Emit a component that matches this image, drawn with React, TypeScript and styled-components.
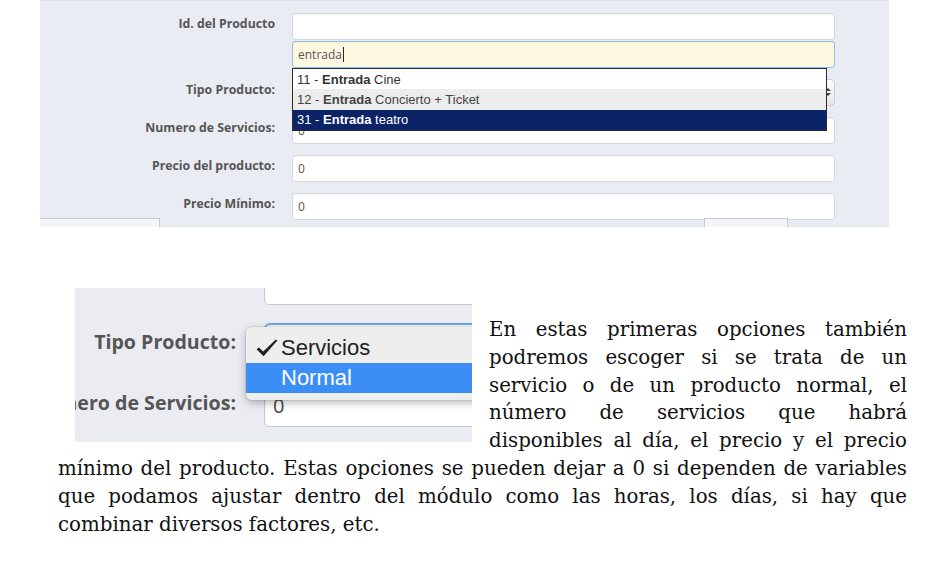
import React from 'react'
import styled, { createGlobalStyle } from 'styled-components'

type Tone = 'plain' | 'hover' | 'active'

const suggestions: { id: string; rest: string; tone: Tone }[] = [
    { id: '11', rest: 'Cine', tone: 'plain' },
    { id: '12', rest: 'Concierto + Ticket', tone: 'hover' },
    { id: '31', rest: 'teatro', tone: 'active' },
]

const besideLines = [
    'En estas primeras opciones también',
    'podremos escoger si se trata de un',
    'servicio o de un producto normal, el',
    'número de servicios que habrá',
    'disponibles al día, el precio y el precio',
]

const fullLines = [
    'mínimo del producto. Estas opciones se pueden dejar a 0 si dependen de variables',
    'que podamos ajustar dentro del módulo como las horas, los días, si hay que',
    'combinar diversos factores, etc.',
]

const App = () => {
    return (
        <Page>
            <GlobalStyle />
            <Shot>
                <FormGrid>
                    <Label>Id. del Producto</Label>
                    <IdStack>
                        <TextBox />
                        <SearchBox>
                            entrada<Caret />
                        </SearchBox>
                        <SuggestList>
                            {suggestions.map((s) => (
                                <SuggestItem key={s.id} $tone={s.tone}>
                                    {s.id} - <b>Entrada</b>&nbsp;{s.rest}
                                </SuggestItem>
                            ))}
                        </SuggestList>
                    </IdStack>

                    <Label>Tipo Producto:</Label>
                    <SelectBox>
                        <SelectArrows width="6" height="10" viewBox="0 0 6 10">
                            <path d="M0 4 L3 1 L6 4 Z M0 6 L3 9 L6 6 Z" fill="#444" />
                        </SelectArrows>
                    </SelectBox>

                    <Label>Numero de Servicios:</Label>
                    <TextBox>0</TextBox>

                    <Label>Precio del producto:</Label>
                    <TextBox>0</TextBox>

                    <Label>Precio Mínimo:</Label>
                    <TextBox>0</TextBox>
                </FormGrid>
                <Footer>
                    <FooterButton $width={121}>Guardar y seguir</FooterButton>
                    <FooterButton $width={84} $right>Guardar</FooterButton>
                </Footer>
            </Shot>

            <Doc>
                <Figure>
                    <ZoomGrid>
                        <ZoomLabel />
                        <ZoomBox />

                        <ZoomLabel>Tipo Producto:</ZoomLabel>
                        <ZoomSelect>
                            <Menu>
                                <MenuItem>
                                    <CheckSlot>
                                        <svg width="22" height="18" viewBox="0 0 22 18">
                                            <path d="M0.5 10.2 L3 8.4 L7.2 12.6 L19.8 0.4 L21.4 1.4 L7.6 17.2 Z" fill="#222" />
                                        </svg>
                                    </CheckSlot>
                                    Servicios
                                </MenuItem>
                                <MenuItem $active>
                                    <CheckSlot />
                                    Normal
                                </MenuItem>
                            </Menu>
                        </ZoomSelect>

                        <ZoomLabel>Numero de Servicios:</ZoomLabel>
                        <ZoomBox>0</ZoomBox>
                    </ZoomGrid>
                </Figure>
                <TextCol>
                    {besideLines.map((l) => (
                        <Line key={l}>{l}</Line>
                    ))}
                    {fullLines.map((l, i) => (
                        <Line key={l} $end={i === fullLines.length - 1}>{l}</Line>
                    ))}
                </TextCol>
            </Doc>
        </Page>
    )
}

const GlobalStyle = createGlobalStyle`
    html, body {
        margin:0;
        padding:0;
        background:#fff;
    }
    body{
        font-family:"Open Sans", "Liberation Sans", sans-serif;
    }
`;

const Page = styled.div`
    width:945px;
    padding-left:40px;
    box-sizing:border-box;
    display:flex;
    flex-direction:column;
`;

/* ---------- top screenshot ---------- */

const Shot = styled.div`
    width:849px;
    height:227px;
    box-sizing:border-box;
    padding-top:12px;
    border-top:1px solid #dfe3eb;
    background:#e9ecf2;
    overflow:hidden;
`;

const FormGrid = styled.div`
    display:grid;
    grid-template-columns:235px 543px;
    column-gap:17px;
    row-gap:11px;
    align-items:start;
`;

const Label = styled.div`
    font-weight:700;
    font-size:12.3px;
    line-height:17px;
    color:#555;
    text-align:right;
    white-space:nowrap;
    padding-top:2px;
`;

const IdStack = styled.div`
    position:relative;
    display:flex;
    flex-direction:column;
    gap:1px;
`;

const TextBox = styled.div`
    height:27px;
    box-sizing:border-box;
    display:flex;
    align-items:center;
    padding:0 5px;
    border:1px solid #d5d8de;
    border-radius:3px;
    background:#fff;
    box-shadow:inset 0 1px 1px rgba(0,0,0,0.05);
    font-family:"Open Sans", sans-serif;
    font-size:12px;
    color:#555;
`;

const SearchBox = styled(TextBox)`
    background:#fef8e1;
    border-color:#8fc0ea;
`;

const Caret = styled.span`
    display:inline-block;
    width:1px;
    height:15px;
    margin-left:1px;
    background:#222;
`;

const SuggestList = styled.div`
    position:absolute;
    z-index:2;
    top:55px;
    left:0;
    width:535px;
    height:63px;
    box-sizing:border-box;
    display:flex;
    flex-direction:column;
    border:1px solid #2b2b2b;
    background:#fff;
`;

const SuggestItem = styled.div<{ $tone: Tone }>`
    flex:1;
    display:flex;
    align-items:center;
    padding-left:4px;
    font-family:"Liberation Sans", Arial, sans-serif;
    font-size:13px;
    white-space:pre;
    color:${(p) => (p.$tone === 'active' ? '#fff' : p.$tone === 'hover' ? '#444' : '#333')};
    background:${(p) => (p.$tone === 'active' ? '#0b2367' : p.$tone === 'hover' ? '#ececec' : '#fff')};

    b{
        font-weight:700;
    }
`;

const SelectBox = styled.div`
    position:relative;
    height:27px;
    box-sizing:border-box;
    border:1px solid #c9ccd2;
    border-radius:4px;
    background:linear-gradient(#fdfdfd, #e6e6e6);
`;

const SelectArrows = styled.svg`
    position:absolute;
    right:3px;
    top:7px;
`;

const Footer = styled.div`
    display:flex;
    margin-top:-2px;
    padding-right:101px;
`;

const FooterButton = styled.div<{ $width: number; $right?: boolean }>`
    width:${(p) => p.$width}px;
    height:30px;
    box-sizing:border-box;
    margin-left:${(p) => (p.$right ? 'auto' : '-1px')};
    padding-top:6px;
    border:1px solid #c9ccd3;
    background:#f3f4f7;
    font-weight:700;
    font-size:13px;
    color:#555;
    text-align:center;
    white-space:nowrap;
`;

/* ---------- document text with zoomed figure ---------- */

const Doc = styled.div`
    width:849px;
    margin-top:61px;
    margin-left:18px;
`;

const Figure = styled.div`
    float:left;
    width:397px;
    height:154px;
    margin:0 17px 0 17px;
    background:#eaecf2;
    overflow:hidden;
`;

const ZoomGrid = styled.div`
    display:grid;
    grid-template-columns:161px 320px;
    column-gap:28px;
    row-gap:18px;
    margin-top:-26px;
    align-items:start;
`;

const ZoomLabel = styled.div`
    min-width:0;
    display:flex;
    justify-content:flex-end;
    padding-top:6px;
    font-weight:700;
    font-size:19.6px;
    line-height:26px;
    color:#555;
    white-space:nowrap;
`;

const ZoomBox = styled.div`
    height:43px;
    box-sizing:border-box;
    display:flex;
    align-items:center;
    padding-left:8px;
    border:1px solid #c6c9d0;
    border-radius:5px;
    background:#fff;
    box-shadow:inset 0 2px 3px rgba(0,0,0,0.08);
    font-size:20px;
    color:#444;
`;

const ZoomSelect = styled.div`
    position:relative;
    z-index:2;
    height:43px;
    box-sizing:border-box;
    border:2px solid #6aa7e6;
    border-radius:6px;
    background:#f6f6f6;
`;

const Menu = styled.div`
    position:absolute;
    top:2px;
    left:-20px;
    width:320px;
    padding:6px 0 7px;
    border-radius:6px;
    background:#eeeeee;
    box-shadow:0 3px 8px rgba(0,0,0,0.28), 0 0 0 1px rgba(0,0,0,0.06);
`;

const MenuItem = styled.div<{ $active?: boolean }>`
    height:30px;
    display:flex;
    align-items:center;
    padding-left:10px;
    font-family:"Liberation Sans", Arial, sans-serif;
    font-size:22px;
    line-height:30px;
    color:${(p) => (p.$active ? '#fff' : '#222')};
    background:${(p) => (p.$active ? '#3a8ef6' : 'transparent')};
`;

const CheckSlot = styled.span`
    width:25px;
    height:18px;
    display:flex;
    align-items:center;
`;

const TextCol = styled.div`
    padding-top:28px;
    font-family:"DejaVu Serif", "Liberation Serif", serif;
    font-size:19.8px;
    line-height:27.8px;
    color:#111;
`;

const Line = styled.span<{ $end?: boolean }>`
    display:block;
    text-align:justify;
    text-align-last:${(p) => (p.$end ? 'left' : 'justify')};
    white-space:nowrap;
`;

export default App;
